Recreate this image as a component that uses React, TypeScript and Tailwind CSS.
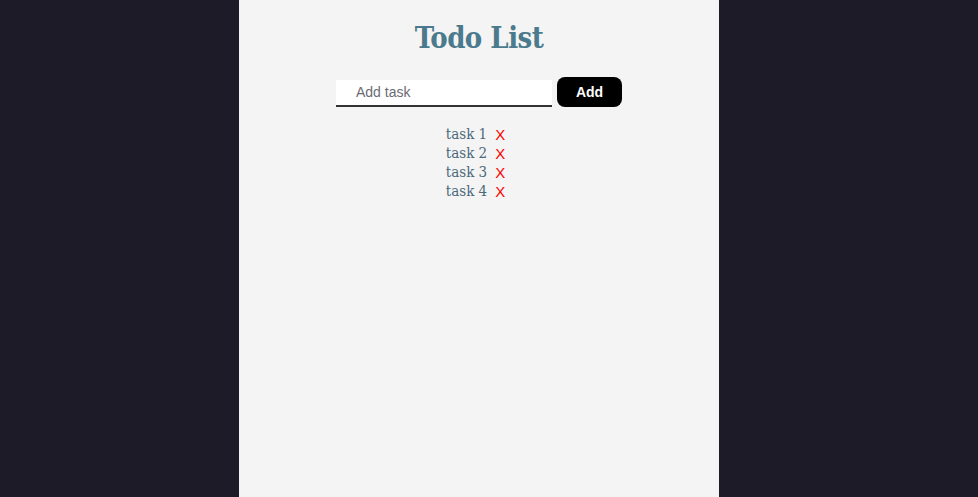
import React, { useState } from 'react'

export default function App() {
  const [tasks, setTasks] = useState(['task 1', 'task 2', 'task 3', 'task 4'])
  const [text, setText] = useState('')

  function add() {
    if (!text.trim()) return
    setTasks([...tasks, text])
    setText('')
  }

  const slab = { fontFamily: '"DejaVu Serif Condensed", "DejaVu Serif", serif', fontStretch: 'condensed' as const }
  const sans = { fontFamily: '"Liberation Sans", Arial, sans-serif' }

  return (
    <div className="min-h-[497px] bg-[#1e1b29] flex pl-[239px]">
      <div className="w-[480px] bg-[#f4f4f4] flex flex-col items-center pt-[19px]">
        <h1 className="text-[29px] leading-[38px] font-bold text-[#4a7a8c] tracking-[-0.5px]" style={slab}>Todo List</h1>
        <div className="flex items-center gap-[5px] mt-[20px]">
          <input
            className="w-[216px] h-[27px] mt-[2px] bg-white border-b-2 border-[#333] pl-[20px] text-[14px] text-[#333] placeholder:text-[#6b6b75] outline-none"
            style={sans}
            placeholder="Add task"
            value={text}
            onChange={(e) => setText(e.target.value)}
          />
          <button
            className="w-[65px] h-[30px] bg-black text-white font-bold text-[14px] rounded-[8px]"
            style={sans}
            onClick={add}
          >
            Add
          </button>
        </div>
        <ul className="mt-[18px] mr-[7px] flex flex-col items-center">
          {tasks.map((t, i) => (
            <li key={i} className="flex items-center gap-[8px] h-[19px] leading-[19px]">
              <span className="text-[15px] text-[#4d6a7a]" style={slab}>{t}</span>
              <span
                className="text-[15px] text-[#ff0000] cursor-pointer"
                style={sans}
                onClick={() => setTasks(tasks.filter((_, j) => j !== i))}
              >
                X
              </span>
            </li>
          ))}
        </ul>
      </div>
    </div>
  )
}
